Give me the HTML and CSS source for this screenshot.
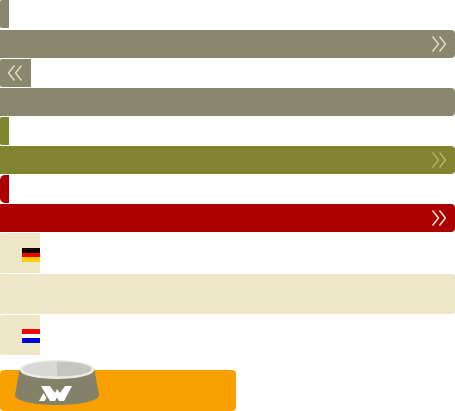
FILE: index.html
```html
<!DOCTYPE html>
<html lang="de">
<head>
    <meta charset="utf-8">
    <meta name="viewport" content="width=device-width, initial-scale=1.0">
    <title>Shop</title>
    <link rel="stylesheet" href="styles.css">
</head>
<body>
    <div class="tab tab_stone tab_top"></div>
    <div class="bar bar_stone bar_top">
        <svg class="arrows" width="14" height="16" viewBox="0 0 14 16"><path d="M0.5 0.5 L6.5 8 L0.5 15.5 M7.5 0.5 L13.5 8 L7.5 15.5"/></svg>
    </div>
    <div class="tab tab_stone tab_back">
        <svg class="arrows" width="14" height="16" viewBox="0 0 14 16"><path d="M6.5 0.5 L0.5 8 L6.5 15.5 M13.5 0.5 L7.5 8 L13.5 15.5"/></svg>
    </div>
    <div class="bar bar_stone"></div>
    <div class="tab tab_olive"></div>
    <div class="bar bar_olive">
        <svg class="arrows" width="14" height="16" viewBox="0 0 14 16"><path d="M0.5 0.5 L6.5 8 L0.5 15.5 M7.5 0.5 L13.5 8 L7.5 15.5"/></svg>
    </div>
    <div class="tab tab_red"></div>
    <div class="bar bar_red">
        <svg class="arrows" width="14" height="16" viewBox="0 0 14 16"><path d="M0.5 0.5 L6.5 8 L0.5 15.5 M7.5 0.5 L13.5 8 L7.5 15.5"/></svg>
    </div>
    <div class="lang">
        <div class="flag flag_de"><span></span><span></span><span></span></div>
    </div>
    <div class="lang_bar"></div>
    <div class="lang">
        <div class="flag flag_nl"><span></span><span></span><span></span></div>
    </div>
    <div class="shop">
        <svg class="bowl" width="88" height="46" viewBox="0 0 88 46">
            <path class="bowl_body" d="M5.500 10 L1 35 C1 41 20 45 43 45 C66 45 85 41 85 35 L80.500 10 Z"/>
            <ellipse class="bowl_rim" cx="43" cy="9.500" rx="37.500" ry="9.500"/>
            <path class="bowl_in_l" d="M43 1.500 C25 1.500 8.500 4.500 8.500 9 C8.500 13.500 25 16.500 43 16.500 Z"/>
            <path class="bowl_in_r" d="M43 1.500 C61 1.500 77.500 4.500 77.500 9 C77.500 13.500 61 16.500 43 16.500 Z"/>
            <path class="bowl_logo" d="M27 26 H36 L41 33 L43 29 L46 33 L51 26 H58 L50 41 H45 L43 37.500 L41 41 H36 Z M29.500 33 L32.500 38 L30.500 41 H25 Z"/>
        </svg>
    </div>
</body>
</html>
```

FILE: styles.css
```css
body {
    margin: 0;
    background-color: #fff;
}
.tab, .bar {
    box-sizing: border-box;
    height: 28px;
    margin-bottom: 1px;
}
.tab {
    width: 9px;
    border-radius: 2px 0 0 2px;
}
.tab_top {
    margin-bottom: 2px;
}
.tab_back {
    width: 31px;
    display: flex;
    align-items: center;
    padding-left: 8px;
}
.tab_stone, .bar_stone {
    background-color: #8a876f;
}
.tab_olive, .bar_olive {
    background-color: #80842e;
}
.tab_red, .bar_red {
    background-color: #ac0000;
}
.tab_red {
    border-radius: 5px 0 0 5px;
}
.bar {
    display: flex;
    align-items: center;
    justify-content: flex-end;
    padding-right: 9px;
    border-radius: 0 4px 4px 0;
}
.arrows path {
    fill: none;
    stroke: #e6e2cc;
    stroke-width: 1.3;
}
.bar_olive .arrows path {
    stroke: #b4b47c;
}
.bar_red .arrows path {
    stroke: #fbeee0;
    stroke-width: 1.5;
}
.lang {
    box-sizing: border-box;
    width: 40px;
    height: 40px;
    margin-bottom: 1px;
    padding-top: 14px;
    display: flex;
    justify-content: flex-end;
    align-items: flex-start;
    background-color: #efe8c8;
    border-radius: 2px 0 0 2px;
}
.lang_bar {
    height: 40px;
    margin-bottom: 1px;
    background-color: #efe8c8;
    border-radius: 0 2px 2px 0;
}
.flag {
    width: 18px;
    display: flex;
    flex-direction: column;
}
.flag span {
    height: 4.67px;
}
.flag_de {
    margin-top: 1px;
}
.flag_de span:nth-child(1) {
    background-color: #0c0000;
}
.flag_de span:nth-child(2) {
    background-color: #f80000;
}
.flag_de span:nth-child(3) {
    background-color: #fccc00;
}
.flag_nl span:nth-child(1) {
    background-color: #fc0000;
}
.flag_nl span:nth-child(2) {
    background-color: #fff;
}
.flag_nl span:nth-child(3) {
    background-color: #0000d8;
}
.shop {
    position: relative;
    width: 236px;
    height: 41px;
    margin-top: 15px;
    background-color: #f7a000;
    border-radius: 4px;
}
.bowl {
    position: absolute;
    left: 14px;
    top: -10px;
}
.bowl_body {
    fill: #84816a;
}
.bowl_rim {
    fill: #ecebe6;
}
.bowl_in_l {
    fill: #d8d8d6;
}
.bowl_in_r {
    fill: #c6c6c0;
}
.bowl_logo {
    fill: #fff;
}
```
